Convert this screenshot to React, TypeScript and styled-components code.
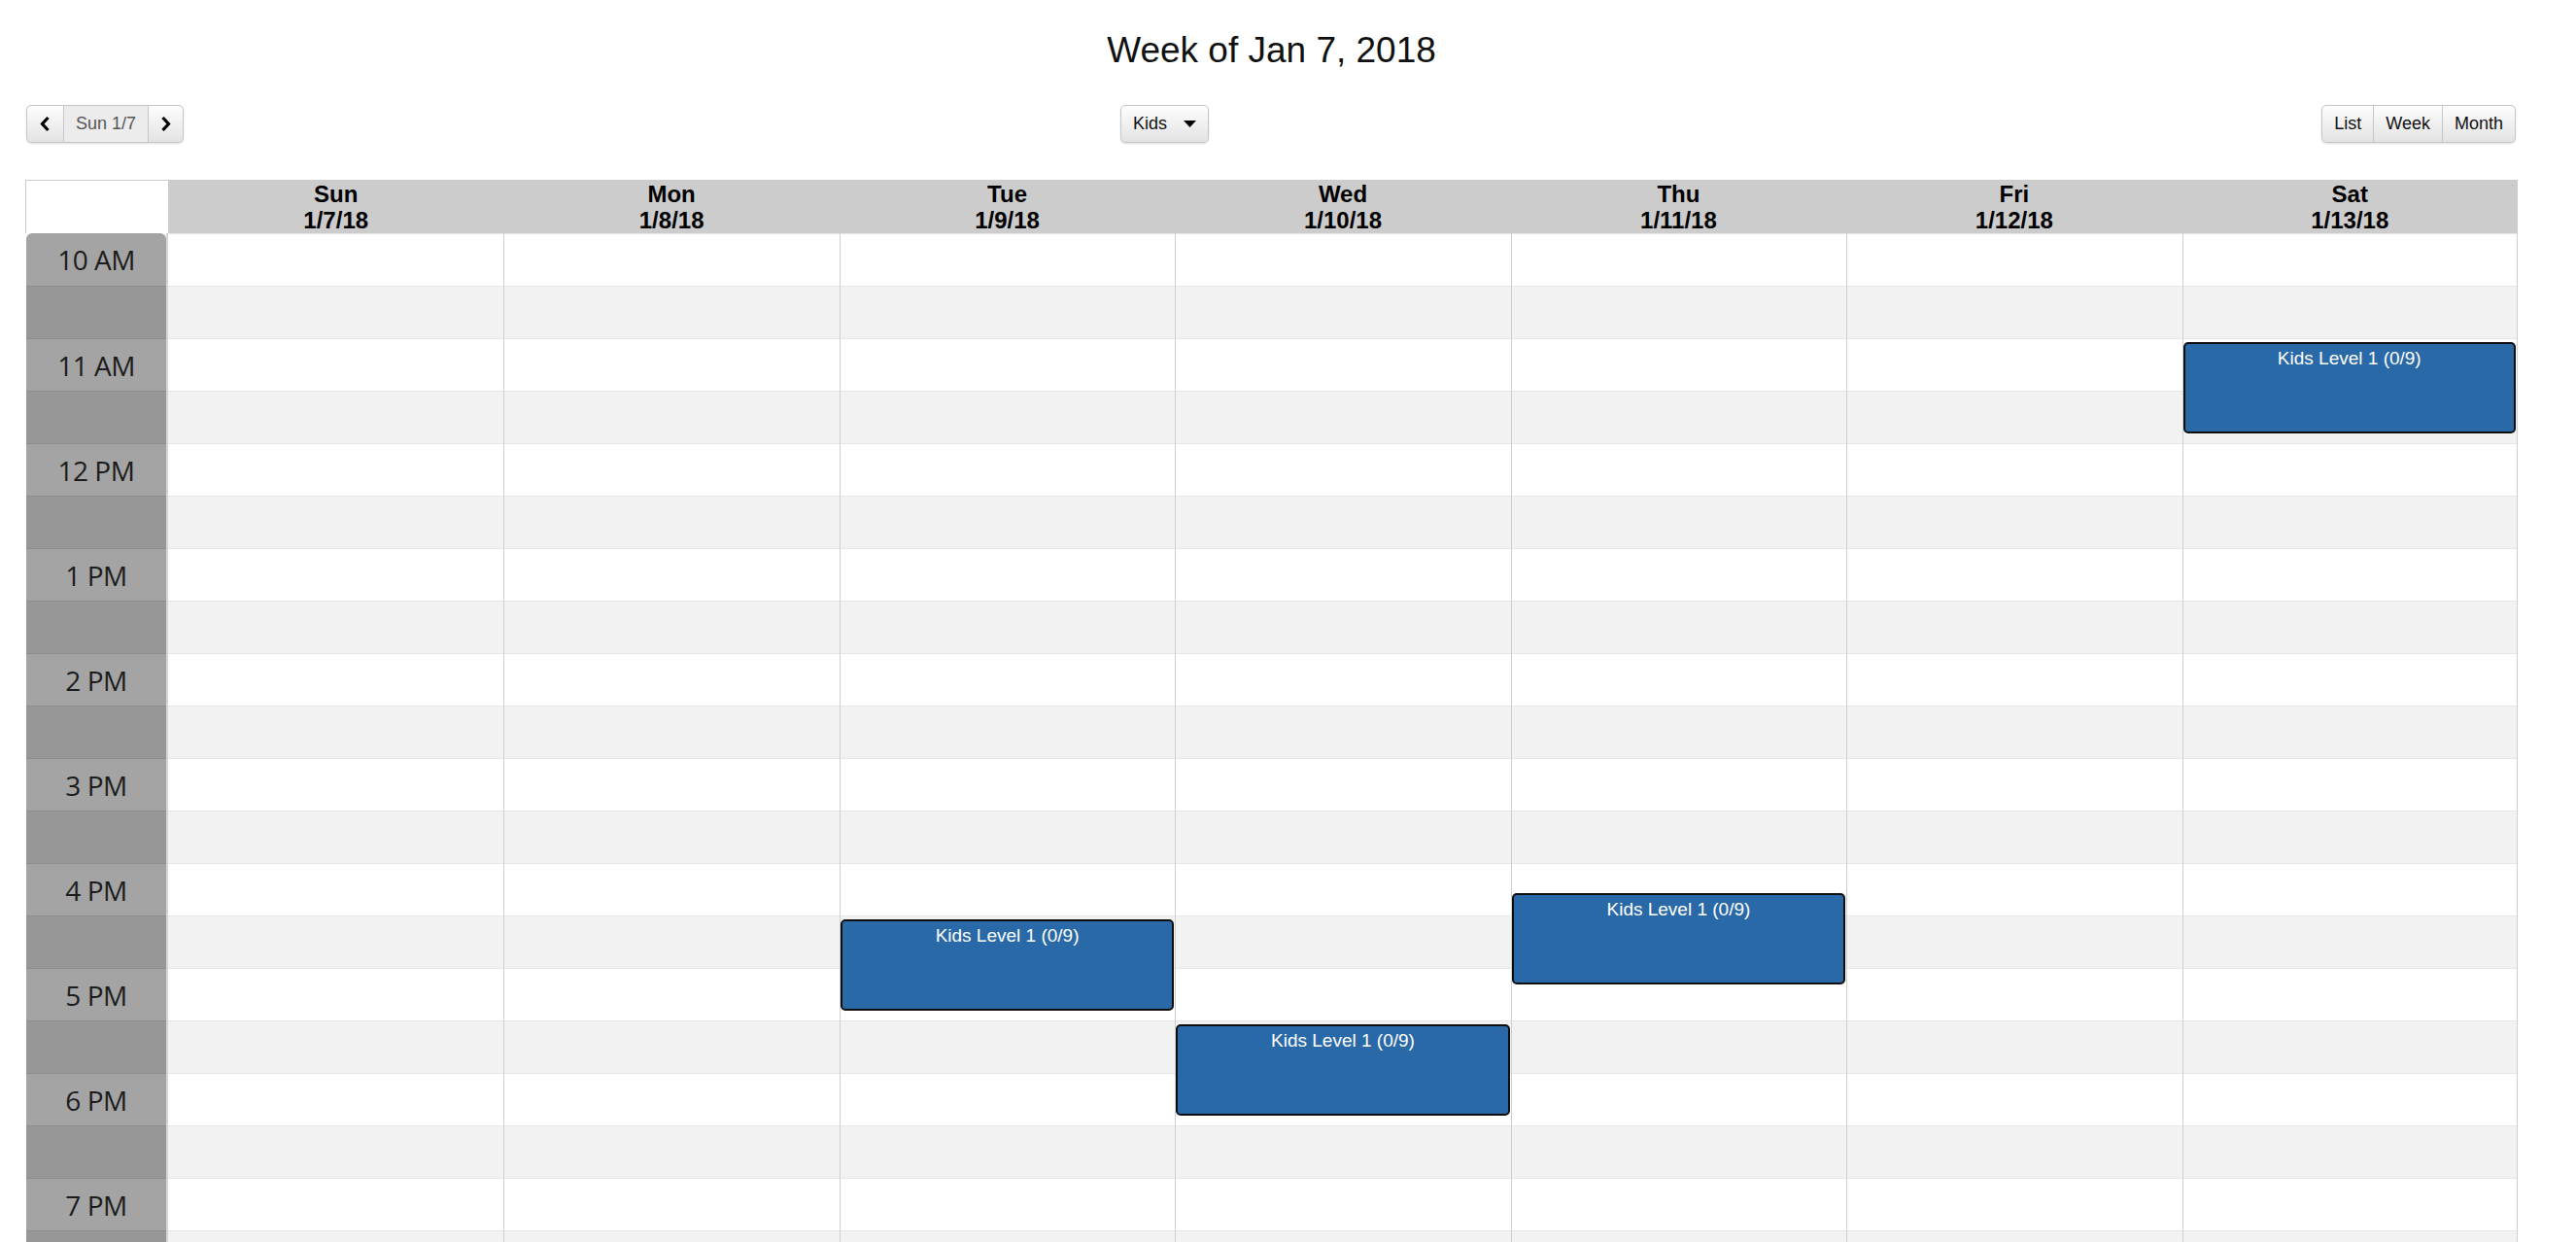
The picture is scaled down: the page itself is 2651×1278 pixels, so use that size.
import React from 'react';
import styled, { createGlobalStyle } from 'styled-components';

const GlobalStyle = createGlobalStyle`
  html, body { margin: 0; padding: 0; background: #fff; overflow: hidden; }
  body { font-family: "Liberation Sans", Arial, sans-serif; }
`;

const Page = styled.div`
  width: 2565px;
  margin-left: 26px;
`;

const Title = styled.h1`
  margin: 0;
  padding-top: 31px;
  font-size: 37px;
  line-height: 42px;
  font-weight: 400;
  text-align: center;
  color: #111;
`;

const Toolbar = styled.div`
  display: grid;
  grid-template-columns: 1126px auto 1fr;
  align-items: center;
  margin-top: 35px;
  height: 39px;
`;

const BtnGroup = styled.div<{ $end?: boolean }>`
  display: flex;
  justify-self: ${(p) => (p.$end ? 'end' : 'start')};
  margin-left: ${(p) => (p.$end ? '0' : '1px')};
  margin-right: ${(p) => (p.$end ? '2px' : '0')};
  border-radius: 5px;
  box-shadow: 0 1px 2px rgba(0, 0, 0, 0.14);
`;

const Btn = styled.button<{ $flat?: boolean; $pad?: number }>`
  height: 39px;
  box-sizing: border-box;
  padding: 0 ${(p) => p.$pad ?? 12}px;
  margin: 0;
  display: flex;
  align-items: center;
  gap: 17px;
  font-family: "Liberation Sans", Arial, sans-serif;
  font-size: 18px;
  color: ${(p) => (p.$flat ? '#555' : '#111')};
  border: 1px solid #c6c6c6;
  background: ${(p) => (p.$flat ? '#ececec' : 'linear-gradient(#fdfdfd, #e3e3e3)')};
  border-radius: 0;
  cursor: pointer;
  & + & { margin-left: -1px; }
  &:first-child { border-radius: 5px 0 0 5px; }
  &:last-child { border-radius: 0 5px 5px 0; }
  &:only-child { border-radius: 5px; }
`;

const Calendar = styled.div`
  margin-top: 38px;
`;

const HeadRow = styled.div`
  display: grid;
  grid-template-columns: 147px repeat(7, 1fr);
  height: 55px;
`;

const Corner = styled.div`
  background: #fff;
  border-left: 1px solid #ccc;
  border-top: 1px solid #ccc;
`;

const DayHead = styled.div`
  background: #ccc;
  display: flex;
  flex-direction: column;
  align-items: center;
  justify-content: center;
  font-weight: 700;
  font-size: 24px;
  line-height: 27px;
  color: #000;
`;

const Body = styled.div`
  display: grid;
  grid-template-columns: 147px repeat(7, 1fr);
`;

const TimeCol = styled.div`
  display: flex;
  flex-direction: column;
  padding-left: 1px;
  border-right: 2px solid #d6d6d6;
`;

const TimeCell = styled.div<{ $half?: boolean }>`
  height: 54px;
  box-sizing: border-box;
  display: flex;
  align-items: center;
  justify-content: center;
  background: ${(p) => (p.$half ? '#979797' : '#a4a4a4')};
  border-top: 1px solid #8c8c8c;
  font-family: "Open Sans", "Noto Sans", sans-serif;
  font-size: 28px;
  letter-spacing: -0.5px;
  color: #1c1c1c;
  &:first-child {
    border-top: none;
    border-radius: 6px 6px 0 0;
  }
`;

const DayCol = styled.div`
  position: relative;
  display: flex;
  flex-direction: column;
  & + & { border-left: 1px solid #cfcfcf; }
  &:last-child { border-right: 1px solid #cfcfcf; }
`;

const Slot = styled.div<{ $half?: boolean }>`
  height: 54px;
  box-sizing: border-box;
  background: ${(p) => (p.$half ? '#f2f2f2' : '#fff')};
  border-top: 1px solid #e6e6e6;
`;

const Event = styled.div<{ $top: number }>`
  position: absolute;
  left: 0;
  right: 1px;
  top: ${(p) => p.$top}px;
  height: 94px;
  box-sizing: border-box;
  background: #2a69a7;
  border: 2px solid #0e0e0e;
  border-radius: 5px;
  padding-top: 4px;
  color: #fff;
  font-size: 19px;
  line-height: 22px;
  text-align: center;
`;

const Chevron = ({ dir }: { dir: 'left' | 'right' }) => (
  <svg width="11" height="17" viewBox="0 0 11 17">
    <polyline
      points={dir === 'left' ? '8.5,2 2.5,8.5 8.5,15' : '2.5,2 8.5,8.5 2.5,15'}
      fill="none"
      stroke="#000"
      strokeWidth="3.2"
      strokeLinejoin="miter"
    />
  </svg>
);

const Caret = () => (
  <svg width="13" height="7" viewBox="0 0 13 7">
    <polygon points="0,0 13,0 6.5,7" fill="#000" />
  </svg>
);

const days = [
  ['Sun', '1/7/18'],
  ['Mon', '1/8/18'],
  ['Tue', '1/9/18'],
  ['Wed', '1/10/18'],
  ['Thu', '1/11/18'],
  ['Fri', '1/12/18'],
  ['Sat', '1/13/18'],
];

const events = [
  { day: 6, start: 11 * 60, title: 'Kids Level 1 (0/9)' },
  { day: 2, start: 16 * 60 + 30, title: 'Kids Level 1 (0/9)' },
  { day: 3, start: 17 * 60 + 30, title: 'Kids Level 1 (0/9)' },
  { day: 4, start: 16 * 60 + 15, title: 'Kids Level 1 (0/9)' },
];

const SLOT_COUNT = 20;
const hourLabel = (h: number) => {
  const suffix = h >= 12 ? 'PM' : 'AM';
  const hh = h % 12 === 0 ? 12 : h % 12;
  return `${hh} ${suffix}`;
};

export default function App() {
  const slots = Array.from({ length: SLOT_COUNT }, (_, i) => i);
  return (
    <>
      <GlobalStyle />
      <Page>
        <Title>Week of Jan 7, 2018</Title>
        <Toolbar>
          <BtnGroup>
            <Btn $pad={13} aria-label="previous">
              <Chevron dir="left" />
            </Btn>
            <Btn $flat $pad={12}>Sun 1/7</Btn>
            <Btn $pad={12} aria-label="next">
              <Chevron dir="right" />
            </Btn>
          </BtnGroup>
          <BtnGroup>
            <Btn>
              Kids
              <Caret />
            </Btn>
          </BtnGroup>
          <BtnGroup $end>
            <Btn>List</Btn>
            <Btn>Week</Btn>
            <Btn>Month</Btn>
          </BtnGroup>
        </Toolbar>
        <Calendar>
          <HeadRow>
            <Corner />
            {days.map(([d, date]) => (
              <DayHead key={d}>
                <span>{d}</span>
                <span>{date}</span>
              </DayHead>
            ))}
          </HeadRow>
          <Body>
            <TimeCol>
              {slots.map((i) => (
                <TimeCell key={i} $half={i % 2 === 1}>
                  {i % 2 === 0 ? hourLabel(10 + i / 2) : ''}
                </TimeCell>
              ))}
            </TimeCol>
            {days.map(([d], di) => (
              <DayCol key={d}>
                {slots.map((i) => (
                  <Slot key={i} $half={i % 2 === 1} />
                ))}
                {events
                  .filter((e) => e.day === di)
                  .map((e, k) => (
                    <Event key={k} $top={(e.start - 600) * 1.8 + 4}>
                      {e.title}
                    </Event>
                  ))}
              </DayCol>
            ))}
          </Body>
        </Calendar>
      </Page>
    </>
  );
}
